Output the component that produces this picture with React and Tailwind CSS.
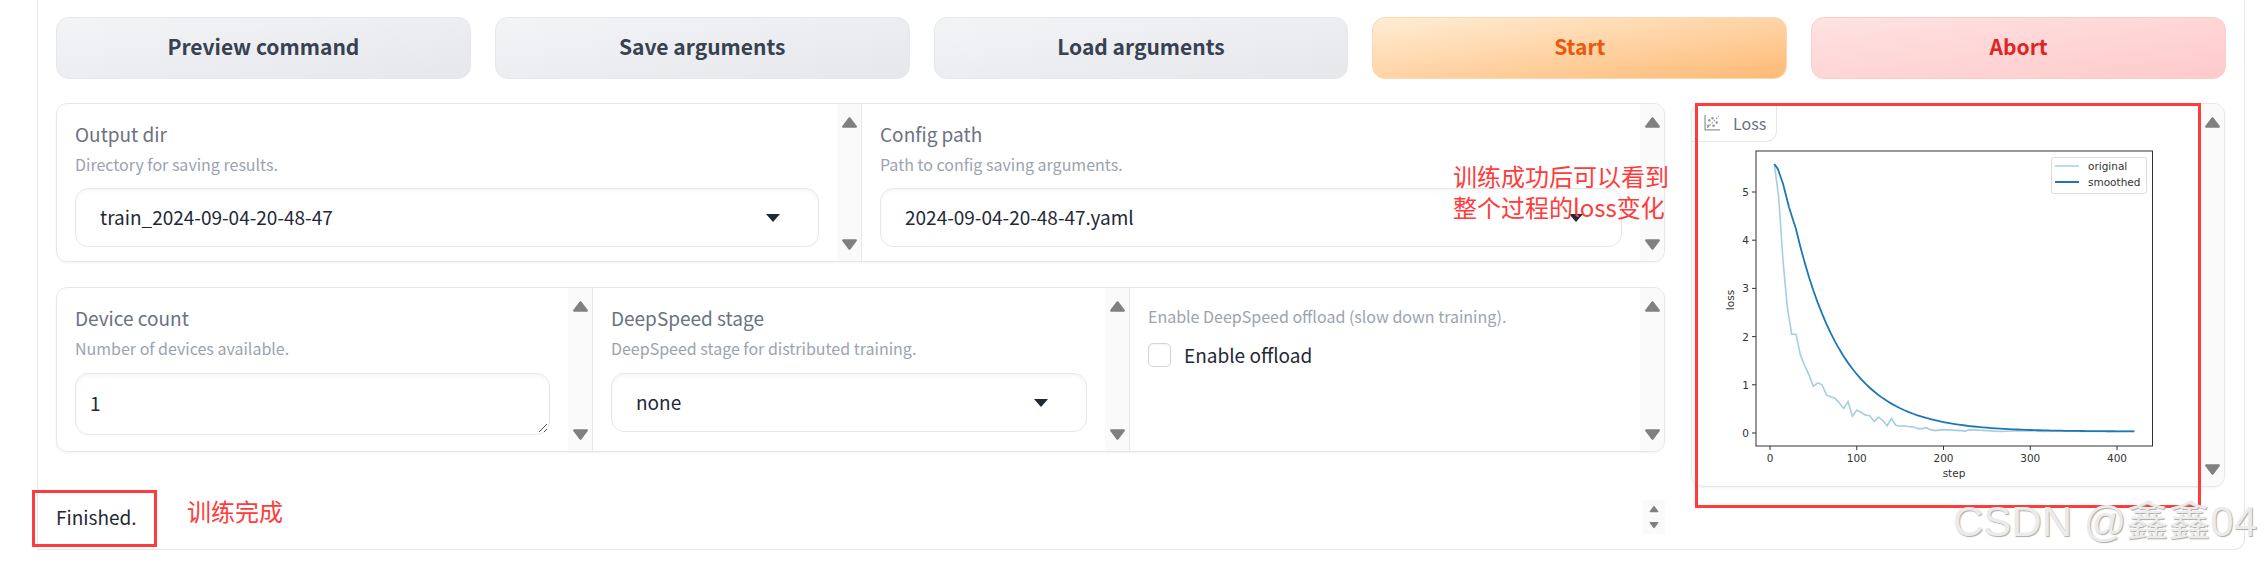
const original = [
  [5, 5.58], [10, 4.9], [15, 3.57], [20, 2.6], [25, 2.05], [30, 2.05], [35, 1.62], [40, 1.4], [45, 1.2], [50, 0.97],
  [55, 1.04], [60, 1.0], [65, 0.79], [70, 0.75], [75, 0.72], [80, 0.62], [85, 0.51], [90, 0.65], [95, 0.35], [100, 0.47],
  [105, 0.43], [110, 0.37], [115, 0.36], [120, 0.24], [125, 0.33], [130, 0.26], [135, 0.15], [140, 0.3], [145, 0.16],
  [150, 0.14], [155, 0.15], [160, 0.13], [165, 0.13], [170, 0.09], [175, 0.09], [180, 0.11], [185, 0.07], [190, 0.05],
  [195, 0.06], [200, 0.07], [210, 0.06], [220, 0.05], [225, 0.04], [230, 0.07], [240, 0.06], [250, 0.05], [265, 0.03],
  [280, 0.04], [300, 0.05], [315, 0.03], [340, 0.04], [360, 0.03], [390, 0.03], [420, 0.04],
]

// first steps read off the picture, after that it is a plain exponential decay
const smoothed = [[5, 5.58], [9, 5.48], [11, 5.38], [15, 5.17], [22, 4.68]]
for (let s = 30; s <= 420; s += 5) smoothed.push([s, 7.2 * Math.exp(-0.018 * s) + 0.03])

const toPts = (data) => data.map(([s, l]) => `${1769 + s * 0.8675},${432 - l * 48.2}`).join(' ')

function Arrow({ down, small }) {
  return (
    <svg viewBox="0 0 16 12" className={small ? 'w-[10px] h-[8px]' : 'w-[17px] h-[13px]'}>
      <polygon
        points={down ? '2,2 14,2 8,10' : '8,2 14,10 2,10'}
        fill="#808080"
        stroke="#808080"
        strokeWidth="2"
        strokeLinejoin="round"
      />
    </svg>
  )
}

function Strip() {
  return (
    <div className="w-6 shrink-0 bg-[#fafafa] flex flex-col items-center justify-between pt-[12px] pb-[10px]">
      <Arrow />
      <Arrow down />
    </div>
  )
}

function Caret() {
  return (
    <svg viewBox="0 0 14 10" className="w-[14px] h-[10px] shrink-0">
      <polygon points="0,1 14,1 7,9" fill="#1f2937" />
    </svg>
  )
}

function Select({ value }) {
  return (
    <div className="h-[59px] pr-[38px] pl-[24px] flex items-center justify-between border border-[#e5e7eb] rounded-[13px] bg-white shadow-[inset_0_2px_4px_rgba(0,0,0,0.04)] text-[19px] text-[#1f2937]">
      <span>{value}</span>
      <Caret />
    </div>
  )
}

function Heading({ label, info, mb = 'mb-[11px]' }) {
  return (
    <>
      <div className="text-[19px] leading-[30px] text-[#6b7280]">{label}</div>
      <div className={`text-[16px] leading-[26px] mt-[2px] ${mb} text-[#9ca3af]`}>{info}</div>
    </>
  )
}

function Column({ className, children, last }) {
  return (
    <div className={`flex min-w-0 ${last ? '' : 'border-r border-[#e5e7eb]'} ${className}`}>
      <div className="flex-1 min-w-0 pl-[18px] pr-[18px] pt-[15px]">{children}</div>
      <Strip />
    </div>
  )
}

function Btn({ children, className }) {
  return (
    <button className={`h-[62px] pb-[2px] rounded-[13px] border text-[21px] font-semibold bg-gradient-to-br ${className}`}>
      {children}
    </button>
  )
}

function LossChart() {
  return (
    <svg viewBox="1691 141 510 346" className="w-[510px] h-[346px] font-['DejaVu_Sans',sans-serif]" fontSize="10.5" fill="#333">
      <polyline points={toPts(original)} fill="none" stroke="#a6cee3" strokeWidth="1.6" />
      <polyline points={toPts(smoothed)} fill="none" stroke="#1f77b4" strokeWidth="1.8" strokeLinejoin="round" />
      <rect x="1755" y="150" width="396.5" height="295" fill="none" stroke="#333" strokeWidth="1" />
      {[0, 1, 2, 3, 4, 5].map((v) => (
        <g key={v}>
          <line x1="1751" x2="1755" y1={432 - v * 48.2} y2={432 - v * 48.2} stroke="#333" />
          <text x="1748" y={436 - v * 48.2} textAnchor="end">{v}</text>
        </g>
      ))}
      {[0, 100, 200, 300, 400].map((v) => (
        <g key={v}>
          <line x1={1769 + v * 0.8675} x2={1769 + v * 0.8675} y1="445" y2="449" stroke="#333" />
          <text x={1769 + v * 0.8675} y="461" textAnchor="middle">{v}</text>
        </g>
      ))}
      <text x="1953" y="476" textAnchor="middle">step</text>
      <text transform="translate(1733 299) rotate(-90)" textAnchor="middle">loss</text>
      <rect x="2050.5" y="156.5" width="95" height="36" rx="2" fill="#fff" stroke="#dcdcdc" />
      <line x1="2054" x2="2078" y1="165" y2="165" stroke="#a6cee3" strokeWidth="1.6" />
      <line x1="2054" x2="2078" y1="181" y2="181" stroke="#1f77b4" strokeWidth="1.8" />
      <text x="2087" y="169">original</text>
      <text x="2087" y="185">smoothed</text>
    </svg>
  )
}

function ChartIcon() {
  return (
    <svg viewBox="0 0 16 16" className="w-[17px] h-[17px] shrink-0" fill="none" stroke="#8f96a3">
      <path d="M1 1v14h14" strokeWidth="1.2" />
      <path d="M3 13l11-11" strokeWidth="1" strokeDasharray="1.5 1.5" />
      <circle cx="5" cy="6" r=".7" fill="#8f96a3" />
      <circle cx="8" cy="4" r=".7" fill="#8f96a3" />
      <circle cx="12" cy="8" r=".7" fill="#8f96a3" />
      <circle cx="4" cy="11" r=".7" fill="#8f96a3" />
      <circle cx="9" cy="11" r=".7" fill="#8f96a3" />
    </svg>
  )
}

export default function App() {
  return (
    <div className="relative w-[2264px] h-[562px] bg-white overflow-hidden font-['Noto_Sans_CJK_SC','Noto_Sans',sans-serif]">
      <div className="ml-[37px] w-[2208px] h-[550px] border-l border-r border-b border-[#e5e7eb] rounded-br-[11px] pl-[18px] pt-[17px]">
        <div className="w-[2170px] grid grid-cols-5 gap-6">
          <Btn className="from-[#f3f4f6] to-[#e5e7eb] border-[#e5e7eb] text-[#374151]">Preview command</Btn>
          <Btn className="from-[#f3f4f6] to-[#e5e7eb] border-[#e5e7eb] text-[#374151]">Save arguments</Btn>
          <Btn className="from-[#f3f4f6] to-[#e5e7eb] border-[#e5e7eb] text-[#374151]">Load arguments</Btn>
          <Btn className="from-[#ffedd5] to-[#fdba74] border-[#fed7aa] text-[#ea580c]">Start</Btn>
          <Btn className="from-[#fee2e2] to-[#fecaca] border-[#fecaca] text-[#dc2626]">Abort</Btn>
        </div>

        <div className="flex gap-[26px] mt-[24px]">
          <div className="w-[1609px] shrink-0">
            <div className="flex h-[159px] border border-[#e5e7eb] rounded-[11px] overflow-hidden shadow-[0_1px_2px_rgba(0,0,0,0.05)]">
              <Column className="w-[805px]">
                <Heading label="Output dir" info="Directory for saving results." />
                <Select value="train_2024-09-04-20-48-47" />
              </Column>
              <Column className="flex-1" last>
                <Heading label="Config path" info="Path to config saving arguments." />
                <Select value="2024-09-04-20-48-47.yaml" />
              </Column>
            </div>

            <div className="flex h-[165px] mt-[25px] border border-[#e5e7eb] rounded-[11px] overflow-hidden shadow-[0_1px_2px_rgba(0,0,0,0.05)]">
              <Column className="w-[536px]">
                <Heading label="Device count" info="Number of devices available." mb="mb-[12px]" />
                <div className="relative h-[62px] pl-[14px] pt-[14px] border border-[#e5e7eb] rounded-[13px] shadow-[inset_0_2px_4px_rgba(0,0,0,0.04)] text-[19px] leading-[30px] text-[#1f2937]">
                  1
                  <svg viewBox="0 0 10 10" className="absolute right-[1px] bottom-[1px] w-[10px] h-[10px]" stroke="#555" fill="none">
                    <path d="M1 9L9 1M6 9l3-3" />
                  </svg>
                </div>
              </Column>
              <Column className="w-[537px]">
                <Heading label="DeepSpeed stage" info="DeepSpeed stage for distributed training." mb="mb-[12px]" />
                <Select value="none" />
              </Column>
              <Column className="flex-1" last>
                <div className="text-[16px] leading-[26px] text-[#9ca3af]">Enable DeepSpeed offload (slow down training).</div>
                <label className="flex items-center gap-[13px] mt-[12px] text-[19px] text-[#1f2937]">
                  <span className="w-[23px] h-[24px] border border-[#d1d5db] rounded-[5px] bg-white shadow-[inset_0_1px_2px_rgba(0,0,0,0.05)]" />
                  Enable offload
                </label>
              </Column>
            </div>
          </div>

          <div className="relative w-[534px] h-[384px] flex border border-[#e5e7eb] rounded-[11px] overflow-hidden shadow-[0_1px_2px_rgba(0,0,0,0.05)]">
            <div className="flex-1 min-w-0">
              <div className="w-[85px] h-[38px] flex items-center gap-[12px] pl-[12px] border-r border-b border-[#e5e7eb] rounded-br-[11px] text-[16px] text-[#6b7280]">
                <ChartIcon />
                Loss
              </div>
              <LossChart />
            </div>
            <Strip />
          </div>
        </div>

        <div className="w-[1609px] h-[62px] pb-[2px] flex items-center justify-between">
          <span className="text-[19px] text-[#1f2937]">Finished.</span>
          <div className="w-[22px] h-[34px] bg-[#fafafa] flex flex-col items-center justify-between py-[5px]">
            <Arrow small />
            <Arrow small down />
          </div>
        </div>
      </div>

      {/* red notes drawn on top of the screenshot */}
      <div className="absolute left-[1695px] top-[103px] w-[506px] h-[405px] border-[3px] border-[#ff3b3b]" />
      <div className="absolute left-[32px] top-[490px] w-[125px] h-[57px] border-[3px] border-[#ff3b3b]" />
      <div className="absolute left-[1453px] top-[160px] text-[24px] leading-[31px] text-[#ff3b3b] whitespace-nowrap">
        训练成功后可以看到
        <br />
        整个过程的loss变化
      </div>
      <div className="absolute left-[187px] top-[494px] text-[24px] leading-[34px] text-[#ff3b3b]">训练完成</div>
      <div className="absolute left-[1953px] top-[495px] text-[42px] leading-[54px] whitespace-nowrap text-[#ebebeb] [text-shadow:1px_1px_1px_#aaa] font-['Liberation_Sans','Noto_Sans_CJK_SC',sans-serif]">
        CSDN @鑫鑫04
      </div>
    </div>
  )
}
